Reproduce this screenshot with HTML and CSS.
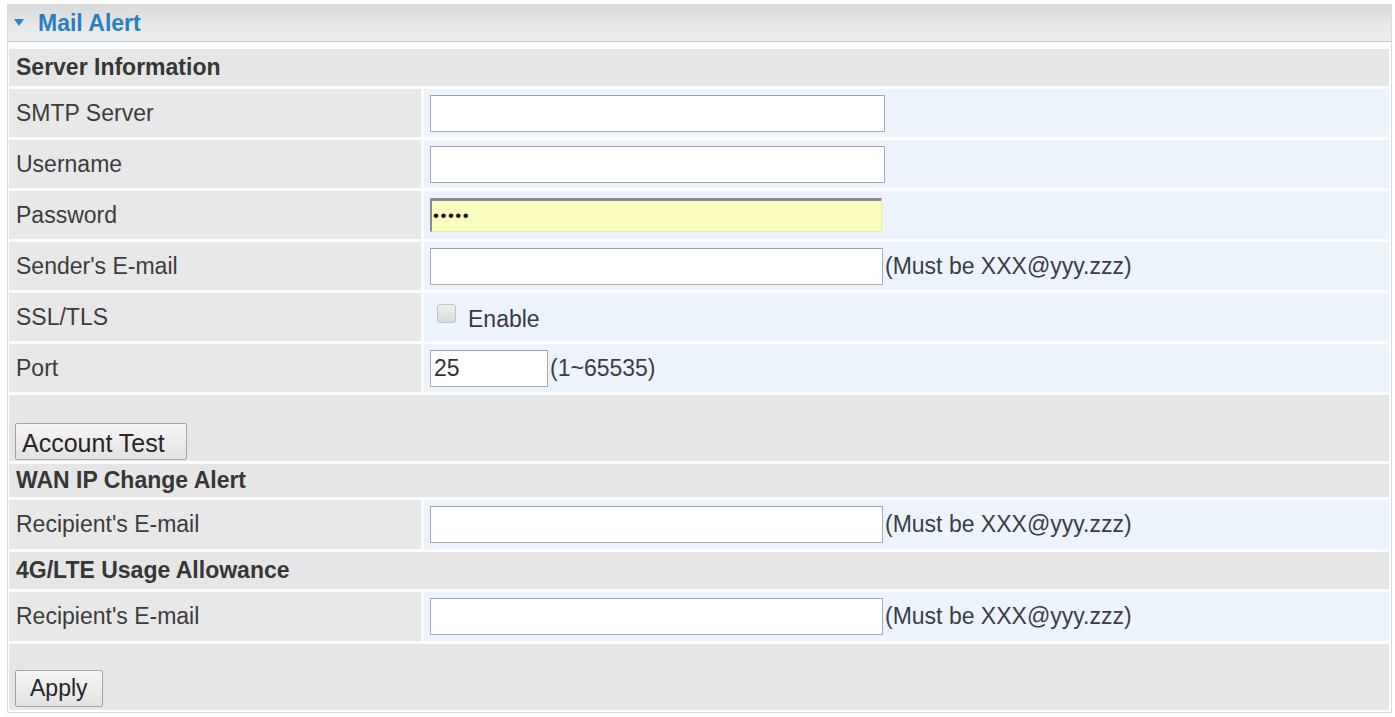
FILE: index.html
```html
<!DOCTYPE html>
<html lang="en">
<head>
<meta charset="utf-8">
<title>Mail Alert</title>
<link rel="stylesheet" href="styles.css">
</head>
<body>
<div class="panel">
  <div class="panel-head"><span class="caret"></span><span class="panel-title">Mail Alert</span></div>
  <div class="panel-body">
    <div class="sec">Server Information</div>
    <div class="row"><div class="lbl">SMTP Server</div><div class="val"><input class="txt" type="text"></div></div>
    <div class="row"><div class="lbl">Username</div><div class="val"><input class="txt" type="text"></div></div>
    <div class="row"><div class="lbl">Password</div><div class="val"><input class="txt pwd" type="password" value="12345"></div></div>
    <div class="row"><div class="lbl">Sender's E-mail</div><div class="val"><input class="txt mail" type="text"><span class="hint">(Must be XXX@yyy.zzz)</span></div></div>
    <div class="row"><div class="lbl">SSL/TLS</div><div class="val"><label class="chk-wrap"><input class="chk" type="checkbox"><span class="chk-text">Enable</span></label></div></div>
    <div class="row"><div class="lbl">Port</div><div class="val"><input class="txt port" type="text" value="25"><span class="hint">(1~65535)</span></div></div>
    <div class="btn-row"><button class="btn btn-test" type="button">Account Test</button></div>
    <div class="sec sec-wan">WAN IP Change Alert</div>
    <div class="row row-tall"><div class="lbl">Recipient's E-mail</div><div class="val"><input class="txt mail" type="text"><span class="hint">(Must be XXX@yyy.zzz)</span></div></div>
    <div class="sec">4G/LTE Usage Allowance</div>
    <div class="row row-tall"><div class="lbl">Recipient's E-mail</div><div class="val"><input class="txt mail" type="text"><span class="hint">(Must be XXX@yyy.zzz)</span></div></div>
    <div class="btn-row btn-row-last"><button class="btn btn-apply" type="button">Apply</button></div>
  </div>
</div>
</body>
</html>
```
FILE: styles.css
```css
html, body {
  margin: 0;
  padding: 0;
  background: #ffffff;
}

body {
  font-family: "Liberation Sans", Arial, sans-serif;
  font-size: 23px;
  color: #3a3a3a;
}

.panel {
  box-sizing: border-box;
  width: 1385px;
  margin: 4px 0 0 7px;
  border: 1px solid #d3dce4;
  background: #fbfcfe;
}

.panel-head {
  height: 36px;
  border-bottom: 1px solid #c5c8cb;
  background: linear-gradient(to bottom, #d9dadb 0%, #e6e7e8 55%, #eeeff0 100%);
  display: flex;
  align-items: center;
  padding-left: 6px;
}

.caret {
  width: 0;
  height: 0;
  border-left: 5px solid transparent;
  border-right: 5px solid transparent;
  border-top: 7px solid #2f83c4;
  margin-right: 14px;
  margin-top: -2px;
}

.panel-title {
  font-weight: bold;
  color: #2a7fc0;
  font-size: 23px;
}

.panel-body {
  padding: 7px 2px 2px 1px;
  display: grid;
  row-gap: 3px;
}

.sec {
  height: 37px;
  background: #e6e6e6;
  display: flex;
  align-items: center;
  padding-left: 7px;
  font-weight: bold;
  color: #363636;
}

.sec-wan {
  height: 33px;
}

.row {
  display: grid;
  grid-template-columns: 412px 1fr;
  column-gap: 3px;
  height: 48px;
}

.row-tall {
  height: 49px;
}

.lbl {
  background: #e8e8e8;
  display: flex;
  align-items: center;
  padding-left: 7px;
  color: #3c3c3c;
}

.val {
  background: #edf3fb;
  display: flex;
  align-items: center;
  padding-left: 6px;
}

.txt {
  box-sizing: border-box;
  width: 455px;
  height: 37px;
  margin: 0;
  border: 1px solid #a9acb0;
  border-top-color: #9ea2a6;
  background: #ffffff;
  font-family: "Liberation Sans", Arial, sans-serif;
  font-size: 23px;
  color: #333;
  padding: 0 3px;
  outline: none;
}

.txt.mail {
  width: 453px;
}

.txt.pwd {
  background: #fafcc0;
  border: 1px solid #e6e8b0;
  border-top: 3px solid #8d8d8d;
  border-left: 2px solid #8d8d8d;
  width: 452px;
  height: 34px;
  font-size: 17px;
  letter-spacing: 1.5px;
  padding: 0 1px;
  color: #111;
}

.txt.port {
  width: 118px;
  padding-left: 3px;
}

.hint {
  margin-left: 2px;
  color: #3c3c46;
}

.chk-wrap {
  display: flex;
  align-items: center;
}

.chk {
  appearance: none;
  -webkit-appearance: none;
  box-sizing: border-box;
  width: 19px;
  height: 19px;
  margin: -8px 0 0 7px;
  border: 1px solid #c2c4c6;
  border-radius: 3px;
  background: linear-gradient(to bottom, #eeeff0, #d9dadc);
}

.chk-text {
  margin-left: 12px;
  margin-top: 4px;
  color: #3a3a44;
}

.btn-row {
  height: 66px;
  background: #e6e6e6;
  display: flex;
  align-items: flex-end;
  padding-left: 6px;
  padding-bottom: 1px;
  box-sizing: border-box;
}

.btn-row-last {
  padding-bottom: 3px;
}

.btn {
  box-sizing: border-box;
  margin: 0;
  height: 37px;
  border: 1px solid #a3a3a3;
  border-radius: 2px;
  background: linear-gradient(to bottom, #f6f6f6, #e2e2e2);
  font-family: "Liberation Sans", Arial, sans-serif;
  color: #262626;
  padding: 0 6px;
  text-align: left;
}

.btn-test {
  width: 172px;
  font-size: 25px;
  padding-top: 4px;
}

.btn-apply {
  width: 88px;
  font-size: 23px;
  padding-left: 14px;
}
```
